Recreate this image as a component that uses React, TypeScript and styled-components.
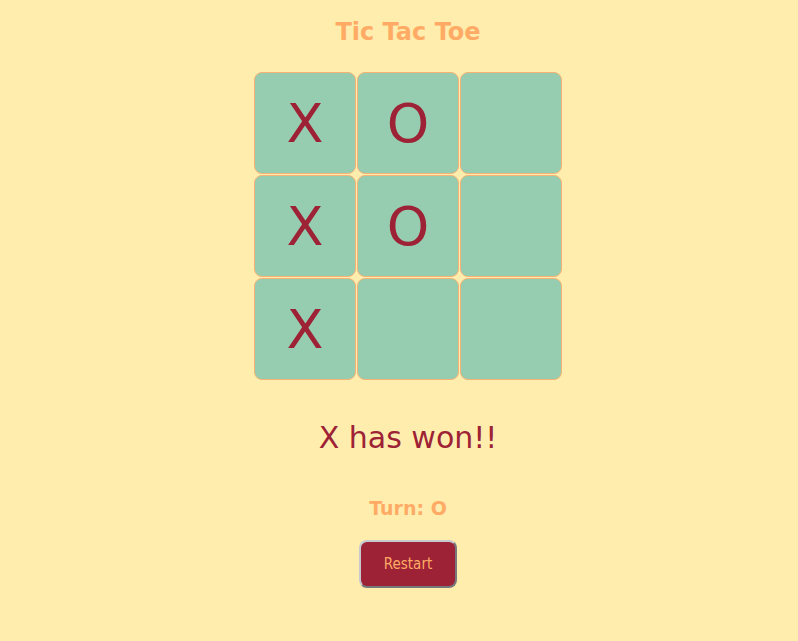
import React from "react";
import styled, { createGlobalStyle } from "styled-components";

const Global = createGlobalStyle`
  html, body { margin: 0; padding: 0; background: #ffedad; }
  body { font-family: "DejaVu Sans", sans-serif; }
`;

const Page = styled.div`
  box-sizing: border-box;
  width: 100%;
  min-height: 641px;
  padding: 0 0 0 18px;
  display: flex;
  flex-direction: column;
  align-items: center;
`;

const Title = styled.h1`
  margin: 17px 0 0;
  font-size: 24px;
  line-height: 30px;
  font-weight: bold;
  color: #ffab66;
`;

const Board = styled.div`
  margin-top: 25px;
  display: grid;
  grid-template-columns: repeat(3, 102px);
  grid-auto-rows: 102px;
  gap: 1px;
`;

const Cell = styled.div`
  box-sizing: border-box;
  border: 1px solid #f5b274;
  border-radius: 8px;
  background: #96cdb1;
  color: #9d2235;
  font-size: 54px;
  display: flex;
  align-items: center;
  justify-content: center;
`;

const Winner = styled.div`
  margin-top: 38px;
  font-size: 30px;
  line-height: 40px;
  color: #9d2235;
`;

const Turn = styled.div`
  margin-top: 38px;
  font-size: 19px;
  font-weight: bold;
  line-height: 24px;
  color: #ffab66;
`;

const Button = styled.button`
  margin-top: 20px;
  width: 98px;
  height: 48px;
  border: 2px outset #c8c8d0;
  border-radius: 8px;
  background: #9d2235;
  color: #ffab66;
  font-family: "DejaVu Sans Condensed", "Liberation Sans Narrow", sans-serif;
  font-size: 15px;
`;

const cells = ["X", "O", "", "X", "O", "", "X", "", ""];

export default function App() {
  return (
    <>
      <Global />
      <Page>
        <Title>Tic Tac Toe</Title>
        <Board>
          {cells.map((c, i) => (
            <Cell key={i}>{c}</Cell>
          ))}
        </Board>
        <Winner>X has won!!</Winner>
        <Turn>Turn: O</Turn>
        <Button>Restart</Button>
      </Page>
    </>
  );
}
